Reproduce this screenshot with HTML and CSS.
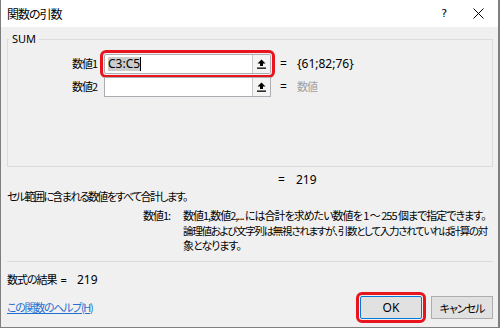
FILE: index.html
```html
<!DOCTYPE html>
<html lang="ja">
<head>
    <meta charset="UTF-8">
    <title>関数の引数</title>
    <link rel="stylesheet" href="styles.css">
</head>
<body>
    <div class="dialog">
        <div class="titlebar">
            <span class="title">関数の引数</span>
            <span class="help">?</span>
            <span class="close">
                <svg width="11" height="11" viewBox="0 0 11 11"><path d="M0.5 0.5 L10.5 10.5 M10.5 0.5 L0.5 10.5" stroke="#000" stroke-width="1"/></svg>
            </span>
        </div>

        <div class="content">
            <fieldset class="group">
                <legend>SUM</legend>

                <div class="arg-row">
                    <label class="arg-label">数値1</label>
                    <div class="ref-box highlight">
                        <span class="ref-text"><span class="selected">C3:C5</span><span class="caret"></span></span>
                        <span class="ref-btn">
                            <svg width="9" height="10" viewBox="0 0 9 10"><path d="M4.5 0.5 L8.5 4.5 L6 4.5 L6 7 L3 7 L3 4.5 L0.5 4.5 Z" fill="#000"/><rect x="0" y="8.5" width="9" height="1.3" fill="#000"/></svg>
                        </span>
                    </div>
                    <span class="eq">=</span>
                    <span class="arg-value">{61;82;76}</span>
                </div>

                <div class="arg-row">
                    <label class="arg-label">数値2</label>
                    <div class="ref-box">
                        <span class="ref-text"></span>
                        <span class="ref-btn">
                            <svg width="9" height="10" viewBox="0 0 9 10"><path d="M4.5 0.5 L8.5 4.5 L6 4.5 L6 7 L3 7 L3 4.5 L0.5 4.5 Z" fill="#000"/><rect x="0" y="8.5" width="9" height="1.3" fill="#000"/></svg>
                        </span>
                    </div>
                    <span class="eq">=</span>
                    <span class="arg-value muted">数値</span>
                </div>
            </fieldset>

            <div class="total"><span class="eq">=</span><span>219</span></div>

            <p class="summary">セル範囲に含まれる数値をすべて合計します。</p>

            <div class="arg-help">
                <span class="arg-help-name">数値1:</span>
                <span class="arg-help-text">
                    <span class="line line-first">数値1,数値2,... には合計を求めたい数値を 1 ～ 255 個まで指定できます。</span>
                    <span class="line line-tight">論理値および文字列は無視されますが、引数として入力されていれば計算の対</span>
                    <span class="line">象となります。</span>
                </span>
            </div>

            <hr class="sep">

            <p class="formula">数式の結果<span class="formula-eq">=</span><span class="formula-value">219</span></p>

            <div class="footer">
                <a class="help-link" href="#">この関数のヘルプ(H)</a>
                <div class="buttons">
                    <button class="btn btn-ok highlight">OK</button>
                    <button class="btn">キャンセル</button>
                </div>
            </div>
        </div>
    </div>
</body>
</html>
```

FILE: styles.css
```css
* {
    box-sizing: border-box;
}

body {
    margin: 0;
    font-family: "Noto Sans CJK JP", "Noto Sans", sans-serif;
    font-size: 11px;
    line-height: 15px;
    letter-spacing: -1px;
    font-feature-settings: "palt";
    color: #000;
}

.dialog {
    width: 500px;
    height: 328px;
    background-color: #f0f0f0;
    border-left: 1px solid #7f7f7f;
    border-right: 2px solid #7f7f7f;
    border-bottom: 1px solid #7f7f7f;
    display: flex;
    flex-direction: column;
}

.titlebar {
    height: 27px;
    background-color: #fff;
    display: flex;
    align-items: center;
    padding: 0 14px 0 6px;
    flex-shrink: 0;
    font-size: 12px;
}

.title {
    flex: 1;
}

.help {
    margin-right: 26px;
    font-family: "DejaVu Sans", sans-serif;
    font-size: 11px;
    letter-spacing: 0;
}

.close {
    display: flex;
}

.content {
    flex: 1;
    padding: 5px 5px 0 6px;
    display: flex;
    flex-direction: column;
}

.group {
    margin: 0;
    height: 135px;
    border: 1px solid #dcdcdc;
    padding: 6px 0 0 0;
}

.group legend {
    padding: 0 3px 0 3px;
    margin-left: 1px;
    line-height: 14px;
    font-family: "Noto Sans", sans-serif;
    letter-spacing: 0;
}

.arg-row {
    display: flex;
    align-items: center;
    height: 23px;
}

.arg-label {
    width: 89px;
    text-align: right;
    margin-right: 7px;
}

.ref-box {
    width: 167px;
    height: 20px;
    background-color: #fff;
    border: 1px solid #abadb3;
    display: flex;
}

.ref-text {
    flex: 1;
    display: flex;
    align-items: center;
    padding-left: 3px;
    font-family: "Noto Sans", sans-serif;
    font-size: 12px;
    letter-spacing: 0;
}

.selected {
    background-color: #cccccc;
    line-height: 14px;
}

.caret {
    width: 1px;
    height: 14px;
    background-color: #000;
}

.ref-btn {
    width: 18px;
    border-left: 1px solid #c8c8c8;
    background-color: #f4f4f4;
    display: flex;
    align-items: center;
    justify-content: center;
}

.highlight {
    outline: 3px solid #e8141e;
    outline-offset: 1px;
    border-radius: 2px;
}

.eq {
    width: 26px;
    padding-left: 9px;
    font-family: "Noto Sans", sans-serif;
    font-size: 12px;
    letter-spacing: 0;
}

.arg-value {
    font-family: "Noto Sans", sans-serif;
    font-size: 12px;
    letter-spacing: 0;
}

.arg-value.muted {
    font-family: "Noto Sans CJK JP", sans-serif;
    font-size: 11px;
    letter-spacing: -1px;
    color: #a0a0a0;
}

.total {
    display: flex;
    padding-left: 268px;
    margin-top: 5px;
    font-family: "Noto Sans", sans-serif;
    font-size: 12px;
    letter-spacing: 0;
}

.total .eq {
    padding-left: 3px;
    width: 21px;
}

.summary {
    margin: 2px 0 0 0;
    letter-spacing: -1.6px;
}

.arg-help {
    display: flex;
    margin-top: 4px;
    padding-left: 136px;
    white-space: nowrap;
}

.arg-help-name {
    width: 40px;
    flex-shrink: 0;
}

.arg-help-text {
    display: flex;
    flex-direction: column;
}

.line-first {
    word-spacing: 0;
}

.line-tight {
    font-size: 10.5px;
    letter-spacing: -1.3px;
}

.sep {
    margin: 8px 0 0 0;
    border: 0;
    border-top: 1px solid #dcdcdc;
}

.formula {
    margin: 10px 0 0 0;
}

.formula-eq {
    margin-left: 4px;
    font-family: "Noto Sans", sans-serif;
    letter-spacing: 0;
}

.formula-value {
    margin-left: 10px;
    font-family: "Noto Sans", sans-serif;
    font-size: 12px;
    letter-spacing: 0;
}

.footer {
    display: flex;
    justify-content: space-between;
    align-items: center;
    margin-top: 9px;
}

.help-link {
    color: #1e6fd0;
    text-decoration: underline;
    letter-spacing: -1.3px;
}

.buttons {
    display: flex;
    gap: 9px;
}

.btn {
    font-family: "Noto Sans CJK JP", sans-serif;
    font-feature-settings: "palt";
    font-size: 11px;
    letter-spacing: -1px;
    height: 23px;
    width: 62px;
    background-color: #e1e1e1;
    border: 1px solid #adadad;
    padding: 0;
}

.btn-ok {
    font-family: "Noto Sans", sans-serif;
    font-size: 12px;
    letter-spacing: 0;
    border-color: #0078d7;
}
```
